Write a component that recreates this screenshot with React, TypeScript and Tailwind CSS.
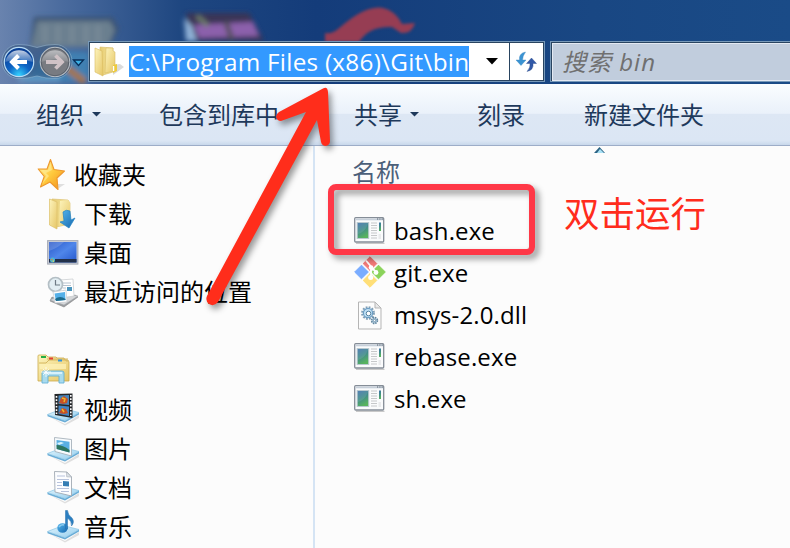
import type { ReactNode } from "react";

const cjk = "font-['Open_Sans','Noto_Sans_CJK_SC',sans-serif]";

function Defs() {
  return (
    <svg className="absolute h-0 w-0">
      <defs>
        <linearGradient id="gold" x1="0" y1="0" x2="1" y2="1">
          <stop offset="0" stopColor="#fdf4bd" />
          <stop offset="1" stopColor="#e6c665" />
        </linearGradient>
        <linearGradient id="goldDark" x1="0" y1="0" x2="1" y2="0">
          <stop offset="0" stopColor="#e6cb70" />
          <stop offset="1" stopColor="#f7e9a4" />
        </linearGradient>
        <linearGradient id="shot" x1="0" y1="0" x2="0.4" y2="1">
          <stop offset="0" stopColor="#3f6fae" />
          <stop offset="0.5" stopColor="#3f8a8c" />
          <stop offset="1" stopColor="#58b35e" />
        </linearGradient>
        <linearGradient id="tray" x1="0" y1="0" x2="1" y2="1">
          <stop offset="0" stopColor="#e2f5fd" />
          <stop offset="1" stopColor="#93cdee" />
        </linearGradient>
        <linearGradient id="blueDown" x1="0" y1="0" x2="1" y2="1">
          <stop offset="0" stopColor="#56b7ee" />
          <stop offset="1" stopColor="#1668ae" />
        </linearGradient>
        <linearGradient id="star" x1="0" y1="0" x2="1" y2="1">
          <stop offset="0" stopColor="#fff2a0" />
          <stop offset="0.5" stopColor="#ffc93c" />
          <stop offset="1" stopColor="#f0891c" />
        </linearGradient>
        <linearGradient id="desk" x1="0" y1="0" x2="1" y2="1">
          <stop offset="0" stopColor="#2a58c8" />
          <stop offset="0.5" stopColor="#4f86ea" />
          <stop offset="1" stopColor="#2456cc" />
        </linearGradient>
        <radialGradient id="back" cx="0.5" cy="0.95" r="0.85">
          <stop offset="0" stopColor="#35d3ff" />
          <stop offset="0.45" stopColor="#0d63c4" />
          <stop offset="1" stopColor="#0a3f94" />
        </radialGradient>
        <linearGradient id="gloss" x1="0" y1="0" x2="0" y2="1">
          <stop offset="0" stopColor="#fff" stopOpacity="0.75" />
          <stop offset="1" stopColor="#fff" stopOpacity="0.18" />
        </linearGradient>
      </defs>
    </svg>
  );
}

function FolderIcon() {
  return (
    <svg width="32" height="34" viewBox="0 0 32 34" className="shrink-0">
      <path d="M20 30 31 22 27 19 20 20Z" fill="#999" opacity=".35" />
      <path d="M7 2 20 3V27L10 30 7 27Z" fill="url(#goldDark)" stroke="#d8bd68" strokeWidth=".6" />
      <path d="M13 3 20 3V6L22 7V26L12 28Z" fill="url(#gold)" stroke="#d8bd68" strokeWidth=".6" />
      <path d="M2 3 9 6 10 31 2 27Z" fill="url(#gold)" stroke="#d8bb5e" strokeWidth=".6" />
      <path d="M20 20 24 19 24 26 20 28Z" fill="#edca3d" />
      <path d="M20.600 21v5" stroke="#fff" strokeWidth="1.300" />
    </svg>
  );
}

function StarIcon() {
  return (
    <svg width="30" height="34" viewBox="0 0 30 34" className="shrink-0">
      <path d="M15 26h13l-6 4z" fill="#888" opacity=".25" />
      <path
        d="M13.500 1.500 17 11.500 27.500 13 20 20 21 31.500 13 24 3.500 29 7.200 18.500 1.200 11 10 11Z"
        fill="url(#star)"
        stroke="#ee982c"
        strokeWidth="1.100"
        strokeLinejoin="round"
      />
      <path d="M13.500 5 15 12 9 15 12 18 5 26 9 18 4 12 11 12Z" fill="#fff3a4" opacity=".55" />
    </svg>
  );
}

function DownloadIcon() {
  return (
    <svg width="32" height="34" viewBox="0 0 32 34" className="shrink-0">
      <path d="M5 2 21 3 23 6V27L9 30 5 27Z" fill="url(#goldDark)" stroke="#dcc273" strokeWidth=".7" />
      <path d="M13 4 21 3 23 6V27L12 29Z" fill="url(#gold)" />
      <path d="M2.500 2 10 5V32L2.500 28Z" fill="url(#gold)" stroke="#dcc06a" strokeWidth=".7" />
      <path d="M16 15q3-3 7-1l1 9 4-2-6 10-9-6 4-1Z" fill="url(#blueDown)" stroke="#2484c4" strokeWidth=".7" />
    </svg>
  );
}

function DesktopIcon() {
  return (
    <svg width="32" height="28" viewBox="0 0 32 28" className="shrink-0">
      <rect x=".6" y="1.600" width="30.300" height="23.500" fill="#c9cdd5" stroke="#a6abb5" />
      <rect x="2" y="3" width="27.500" height="20.500" fill="url(#desk)" />
      <path d="M2 3H17Q11 9 2 12Z" fill="#fff" opacity=".16" />
      <rect x="2" y="20" width="27.500" height="3.500" fill="#223049" />
      <circle cx="5.500" cy="21" r="2.500" fill="#4bb7cf" />
      <path d="M4.200 20h1.200v1.200H4.200z" fill="#ff6a2b" />
      <path d="M5.700 21.400h1.300v1.300H5.700z" fill="#f8e04b" />
    </svg>
  );
}

function RecentIcon() {
  return (
    <svg width="32" height="32" viewBox="0 0 32 32" className="shrink-0">
      <path d="M3 25 17 31 31 21 28 19 15 25 5 21Z" fill="#9a9da1" stroke="#888" strokeWidth=".6" />
      <path d="M3 24 16 18 31 20 17 29Z" fill="#d5d7d9" stroke="#9fa3a8" strokeWidth=".5" />
      <path d="M13 4 26 3 27 20 14 22Z" fill="#fff" stroke="#c4c8cc" strokeWidth=".7" />
      <path d="M16 7h8M16 9.500h8M16 12h3M16 14.500h3" stroke="#b8c3cf" strokeWidth="1" />
      <path d="M20 11h5v4h-5z" fill="#4b95bd" />
      <circle cx="8.500" cy="8.500" r="7" fill="#e2eef3" stroke="#b4bfc5" strokeWidth="1.700" />
      <path d="M8.500 4V9H13" fill="none" stroke="#6d7a84" strokeWidth="1.200" />
      <path d="M6 16 19 14 20 26 8 27Z" fill="#fff" stroke="#c8ccd0" strokeWidth=".7" />
      <path d="M7.500 17.500 18 16 18.500 24 9 25Z" fill="#55b0e8" />
      <path d="M8 23q5-4 10.500 0v1L9 25Z" fill="#1d6b8d" />
    </svg>
  );
}

function LibraryIcon() {
  return (
    <svg width="33" height="31" viewBox="0 0 33 31" className="shrink-0">
      <path d="M1 2Q1 1 2 1H9L11 3H19L20 4H27L28 6H31L32 8V27H1Z" fill="url(#gold)" stroke="#caa94c" strokeWidth=".8" />
      <path d="M10 5h21M2 9H9L12 6H30V8" fill="none" stroke="#d6b861" strokeWidth="1" />
      <path d="M3 10H29V15H3Z" fill="#fdf2b8" opacity=".75" />
      <path d="M4 2h5v2H4z" fill="#23ae45" />
      <path d="M12 3.500h4v2h-4z" fill="#e54031" />
      <path d="M21 5.500h4v2h-4z" fill="#3494dc" />
      <path d="M5 29V19Q5 17 7 17H25Q27 17 27 19V29H22V22H11V29Z" fill="#a6dcf3" stroke="#5eadd4" strokeWidth=".9" opacity=".95" />
      <path d="M7 19H25" stroke="#e7f9ff" strokeWidth="1.500" />
      <path d="M9 13v10M4 18h10M6 15l6 6M12 15l-6 6" stroke="#fff" strokeWidth=".7" />
    </svg>
  );
}

function Tray({ children }: { children: ReactNode }) {
  return (
    <svg width="33" height="34" viewBox="0 0 33 34" className="shrink-0">
      <path d="M3 25 18 32 32 23V26L18 33.500Z" fill="#888" opacity=".25" />
      <path d="M.5 22.500V24.200L18 30.500 32 22.500V20.500L18 28.500Z" fill="#69acd6" />
      <path d="M.5 22.500 16 16.500 32 20.500 18 28.500Z" fill="url(#tray)" stroke="#8cc6e4" strokeWidth=".7" />
      {children}
    </svg>
  );
}

function VideoIcon() {
  return (
    <Tray>
      <path d="M7.500 2 25.500 1.500V26L8 23Z" fill="#25272a" />
      <path d="M11.500 3.500 22 3V13L11.500 12Z" fill="#4787bf" />
      <path d="M11.500 13.500 22 14.500V24L11.500 22Z" fill="#4285c4" />
      <path d="m12 11 2-5 3-2 4 3-1 4-4 1ZM12 21l3-5 4 1 2 4-4 1Z" fill="#c65126" />
      <path d="m15 6 3 1-1 3M15 17l2 3" fill="none" stroke="#e9b62c" strokeWidth="1.500" />
      <path d="M9.500 4V22M23.800 3V24" stroke="#fff" strokeWidth="1.600" strokeDasharray="1.700 1.600" />
    </Tray>
  );
}

function PictureIcon() {
  return (
    <Tray>
      <path d="M7.500 6.500 24.500 8.500V25L8 20.500Z" fill="#f8fbfd" stroke="#a7b2bb" strokeWidth=".9" />
      <path d="M9.500 9 22.500 10.700V21.500L9.700 18Z" fill="#59afe2" />
      <path d="M9.500 14Q16 14 22.500 19V21.500L9.700 18Z" fill="#2d755e" />
      <path d="m10 12 4-1 3 1-5 2Z" fill="#d9f4fd" />
    </Tray>
  );
}

function DocumentIcon() {
  return (
    <Tray>
      <path d="M7.500 1.500 20 2 24.500 7V26L8 22Z" fill="#fcfdff" stroke="#a2aab3" strokeWidth=".9" />
      <path d="m19.500 2 .2 4.800 4.800.2Z" fill="#dce2e8" stroke="#a2aab3" strokeWidth=".6" />
      <path d="M10 6h8M10 9.500h12M10 12.500h5M10 15.500h5M10 18.500h12M14 21.500h8" stroke="#b8c3dc" strokeWidth="1" />
      <path d="m16 11 6 .5v5L16 16Z" fill="#357db3" />
    </Tray>
  );
}

function MusicIcon() {
  return (
    <Tray>
      <ellipse cx="15.500" cy="19" rx="5.200" ry="4.800" fill="url(#blueDown)" />
      <path d="M18.500 1.500H20.500Q21 6 25 9 28 13 24.500 17 25 12 20.500 9V20H18.500Z" fill="#2b7fc1" stroke="#236da9" strokeWidth=".5" />
      <path d="M12 18q2-3 5-2" fill="none" stroke="#8acbef" strokeWidth="1.500" />
    </Tray>
  );
}

function ExeIcon() {
  return (
    <svg width="32" height="27" viewBox="0 0 32 27" className="mb-[2px] shrink-0">
      <path d="M2 26.300H30.500" stroke="#bbb" strokeWidth="1" />
      <rect x=".7" y=".7" width="29" height="24.300" rx="1" fill="#fafbfc" stroke="#858d97" strokeWidth="1.300" />
      <path d="M1.500 1.500H29V3.300H1.500Z" fill="#c6cfd9" />
      <path d="M23 2h1.200M25.300 2h1.200M27.600 2h1.200" stroke="#52606f" strokeWidth="1.200" />
      <rect x="3.200" y="5.500" width="11.500" height="16" fill="url(#shot)" stroke="#b9c9cf" />
      <path d="M4 17Q11 15 14 7V6H4Z" fill="#fff" opacity=".1" />
      <path d="M17 6h6M17 8.500h6M17 11h6M17 13.500h6M17 16h6M17 18.500h6M17 21h6" stroke="#c6c8ca" strokeWidth="1" />
      <path d="M25 5.500h2V14H25Z" fill="url(#shot)" />
      <path d="M24.500 17h2.500V22H24.500Z" fill="#e9eaec" />
    </svg>
  );
}

function GitIcon() {
  return (
    <svg width="32" height="32" viewBox="0 0 32 32" className="mb-[2px] shrink-0">
      <path d="m16 .8 6.800 6.800-6.800 6.800-6.800-6.800Z" fill="#f37b79" stroke="#f37b79" strokeLinejoin="round" />
      <path d="m24.500 9.200 6.800 6.800-6.800 6.800-6.800-6.800Z" fill="#8bd35b" stroke="#8bd35b" strokeLinejoin="round" />
      <path d="m7.500 9.200 6.800 6.800-6.800 6.800L.7 16Z" fill="#79acff" stroke="#79acff" strokeLinejoin="round" />
      <path d="m16 17.600 6.800 6.800-6.800 6.800-6.800-6.800Z" fill="#ffdf78" stroke="#ffdf78" strokeLinejoin="round" />
      <path d="M12 4.500 17 10.500V21M17 11 22 16" fill="none" stroke="#fff" strokeWidth="1.800" />
      <circle cx="17" cy="11.500" r="2.300" fill="#fff" />
      <circle cx="16.700" cy="21.500" r="2.500" fill="#fff" />
      <circle cx="22" cy="16.500" r="2.400" fill="#fff" />
    </svg>
  );
}

function DllIcon() {
  return (
    <svg width="32" height="29" viewBox="0 0 32 29" className="shrink-0">
      <path d="M4.500 1H21L27 7V28H4.500Z" fill="#fcfcfc" stroke="#b5b5b5" />
      <path d="M21 1V7H27Z" fill="#e9e9e9" stroke="#b5b5b5" />
      <circle cx="14" cy="12" r="5.900" fill="none" stroke="#7f9fb6" strokeWidth="2" strokeDasharray="1.800 1.290" />
      <circle cx="14" cy="12" r="4.600" fill="#bfe0f5" stroke="#6b9dc4" strokeWidth="1.200" />
      <circle cx="14.500" cy="12.500" r="2.300" fill="#fff" stroke="#55829f" />
      <circle cx="20.500" cy="19.500" r="2.900" fill="#c3dcec" stroke="#64879f" strokeWidth="1.600" strokeDasharray="1.500 .780" />
      <circle cx="20.500" cy="19.500" r="1.200" fill="#fff" stroke="#557e9d" strokeWidth=".8" />
    </svg>
  );
}

function Wallpaper() {
  return (
    <svg width="790" height="84" className="absolute inset-0">
      <defs>
        <linearGradient id="sky" x1="0" y1="0" x2="1" y2="0">
          <stop offset="0" stopColor="#6983ae" />
          <stop offset="0.08" stopColor="#4a6b9e" />
          <stop offset="0.23" stopColor="#1e4680" />
          <stop offset="0.4" stopColor="#143c7a" />
          <stop offset="0.75" stopColor="#194783" />
          <stop offset="1" stopColor="#1a4b87" />
        </linearGradient>
        <filter id="soft" filterUnits="userSpaceOnUse" x="0" y="0" width="790" height="84">
          <feGaussianBlur stdDeviation="2.800" />
        </filter>
      </defs>
      <rect width="790" height="84" fill="url(#sky)" />
      <g filter="url(#soft)">
        <path d="M34 17H113L119 29 110 46H30Z" fill="#3a5273" />
        <path d="M37 21H110L115 30 108 47H31Z" fill="#6a7f8f" />
        <path d="M45 25v18M58 25v18M72 25v18M86 25v18M98 25v18" stroke="#788a97" strokeWidth="5" />
        <path d="M186 13H249L264 41H190Z" fill="#3b3556" />
        <path d="M194 25 253 22 259 36 199 38Z" fill="#8c60ac" />
        <path d="M184 18 192 26 197 41H186Z" fill="#8fb0d6" />
        <path d="M197 16 208 26" stroke="#71806a" strokeWidth="4" />
        <path d="M226 22 232 40" stroke="#52505a" strokeWidth="5" />
        <path d="M45 51 89 52V82H22L30 74Z" fill="#3f80b2" />
        <path d="M64 66 85 82" stroke="#a57548" strokeWidth="7" />
        <path d="M18 76H60V82H18Z" fill="#79afd5" opacity=".55" />
      </g>
      <path
        d="M325 33Q333 34 338 29C350 19 363 8 378 7.500Q394 8 402 24L415 23Q412 34 401 33L392 27Q369 26 359 42H325Z"
        fill="#963d53"
        className="blur-[1.500px]"
      />
    </svg>
  );
}

function NavButtons() {
  return (
    <svg width="88" height="40" viewBox="0 0 88 40" className="shrink-0">
      <path
        d="M19 3.500Q28 3.500 37 6.500 46 3.500 55 3.500A17 17 0 0 1 55 37.500Q46 37.500 37 35 28 37.500 19 37.500A17 17 0 0 1 19 3.500Z"
        fill="#22446b"
        fillOpacity=".4"
        stroke="#a9cae1"
        strokeOpacity=".45"
      />
      <circle cx="19" cy="21" r="14.700" fill="url(#back)" stroke="#b9dcf4" strokeWidth="1.200" />
      <path d="M5.200 21A14 14 0 0 1 32.800 21Q18 16 5.200 21Z" fill="url(#gloss)" />
      <path d="M27 21H13M18.500 14.500 12 21 18.500 27.500" fill="none" stroke="#fff" strokeWidth="4" />
      <circle cx="55" cy="21" r="14.700" fill="#787b81" stroke="#b4bcc4" strokeWidth="1.200" />
      <circle cx="55" cy="21" r="13.800" fill="none" stroke="#4b535e" strokeWidth=".7" />
      <path d="M41.200 21A14 14 0 0 1 68.800 21Q54 16 41.200 21Z" fill="url(#gloss)" opacity=".65" />
      <path d="M46 21H61M55.500 14.500 62 21 55.500 27.500" fill="none" stroke="#cfc2c6" strokeWidth="3.800" />
      <path d="M73.500 19H83.500L78.500 24.500Z" fill="#3bb0e5" stroke="#092e59" strokeWidth="1.300" />
    </svg>
  );
}

function RefreshIcon() {
  return (
    <svg width="25" height="24" viewBox="0 0 25 24">
      <path d="M11.500 2Q4.500 3.500 5.500 10H2L7 15.500 12 10H8.500Q8.500 6 11.500 2Z" fill="#3a93d2" stroke="#3a86bf" strokeWidth=".4" />
      <path d="M13 21.500Q20 20 19 13.500H22.500L17.500 8 12.500 13.500H16Q16.500 17.500 13 21.500Z" fill="#3158a7" stroke="#294888" strokeWidth=".4" />
    </svg>
  );
}

function AddressBar() {
  return (
    <div className="flex h-[41px] w-[457px] shrink-0 border border-[#7799b9] bg-[#294460] p-px">
      <div className="flex min-w-0 flex-1 items-center bg-white">
        <div className="ml-[3px] w-[36px]">
          <FolderIcon />
        </div>
        <div className={`flex h-[31px] w-[340px] items-center whitespace-pre bg-[#3399ff] text-[24.300px] leading-none text-white ${cjk}`}>
          <span className="pt-px tracking-[0.260px]">C:\Program Files (x86)\Git\bin</span>
        </div>
        <svg width="12" height="7" className="ml-[17px]">
          <path d="M0 0H12L6 6.500Z" fill="#000" />
        </svg>
      </div>
      <div className="ml-px flex w-[33px] items-center justify-center bg-white">
        <RefreshIcon />
      </div>
    </div>
  );
}

function Caret() {
  return (
    <svg width="9" height="5">
      <path d="M0 0H9L4.500 4.500Z" fill="#1e395b" />
    </svg>
  );
}

const commands = [
  { label: "组织", width: "w-[123px]", menu: true },
  { label: "包含到库中", width: "w-[195px]", menu: false },
  { label: "共享", width: "w-[123px]", menu: true },
  { label: "刻录", width: "w-[107px]", menu: false },
  { label: "新建文件夹", width: "w-[150px]", menu: false },
];

const places = [
  { label: "收藏夹", icon: <StarIcon />, root: true },
  { label: "下载", icon: <DownloadIcon /> },
  { label: "桌面", icon: <DesktopIcon /> },
  { label: "最近访问的位置", icon: <RecentIcon /> },
];

const libraries = [
  { label: "库", icon: <LibraryIcon />, root: true },
  { label: "视频", icon: <VideoIcon /> },
  { label: "图片", icon: <PictureIcon /> },
  { label: "文档", icon: <DocumentIcon /> },
  { label: "音乐", icon: <MusicIcon /> },
];

const files = [
  { name: "bash.exe", icon: <ExeIcon /> },
  { name: "git.exe", icon: <GitIcon /> },
  { name: "msys-2.0.dll", icon: <DllIcon /> },
  { name: "rebase.exe", icon: <ExeIcon /> },
  { name: "sh.exe", icon: <ExeIcon /> },
];

function TreeGroup({ items }: { items: { label: string; icon: ReactNode; root?: boolean }[] }) {
  return (
    <ul>
      {items.map((item) => (
        <li key={item.label} className={`flex h-[39.100px] items-center ${item.root ? "pl-[37px]" : "pl-[47px]"}`}>
          <span className="flex w-[37px] shrink-0">{item.icon}</span>
          <span className="pt-px text-2xl leading-none whitespace-nowrap">{item.label}</span>
        </li>
      ))}
    </ul>
  );
}

function Annotations() {
  return (
    <>
      <svg width="790" height="548" className="absolute inset-0 drop-shadow-[3px_4px_3px_rgba(0,0,0,0.4)]">
        <path
          d="M323 88.500Q327.500 86 328 92L330 141Q330 145 326 146Q322 146 321 142L317 120 218 302Q214 307 209 304Q205 301 207 296L306 112 281 121Q277 121 276 117Q276 114 279 112Z"
          fill="#ff2d1b"
        />
      </svg>
      <div className="absolute top-[184px] left-[328px] h-[71px] w-[207px] rounded-[8px] border-[6px] border-[#ff3847] drop-shadow-[4px_4px_3px_rgba(0,0,0,0.4)]" />
      <div className="absolute top-[194px] left-[564px] text-[35.500px] leading-[38px] whitespace-nowrap text-[#ff2c1c]">双击运行</div>
    </>
  );
}

export default function App() {
  return (
    <div className={`relative flex h-[548px] w-[790px] flex-col overflow-hidden bg-[#fcfcfc] text-black ${cjk}`}>
      <Defs />
      <header className="relative h-[84px] shrink-0 border-b border-[#152638]">
        <Wallpaper />
        <div className="relative flex h-full items-start pt-[41px]">
          <NavButtons />
          <AddressBar />
          <div className="ml-[5px] flex h-[41px] flex-1 border border-r-0 border-[#7799b9] bg-[#294460] pt-px pl-px">
            <div className="flex flex-1 items-center border border-r-0 border-[#e3e9f2] bg-[#c1cddd] pl-[9px] text-2xl leading-none tracking-[1px] text-[#707070] italic">
              搜索 bin
            </div>
          </div>
        </div>
      </header>
      <nav className="flex h-[62px] shrink-0 items-center border-b border-[#9dadc8] bg-[linear-gradient(#fafdff_0%,#eaf1fa_48%,#dde7f4_50%,#dbe6f4_93%,#c8d8eb_100%)] pl-[36px] text-2xl leading-none text-[#1e395b]">
        {commands.map((command) => (
          <div key={command.label} className={`flex shrink-0 items-center gap-2 whitespace-nowrap ${command.width}`}>
            {command.label}
            {command.menu && <Caret />}
          </div>
        ))}
      </nav>
      <main className="flex min-h-0 flex-1">
        <aside className="flex w-[315px] shrink-0 flex-col gap-[39px] border-r-2 border-[#d5e4f4] pt-[9px]">
          <TreeGroup items={places} />
          <TreeGroup items={libraries} />
        </aside>
        <section className="flex-1">
          <div className="flex h-[64px] flex-col">
            <svg width="11" height="6" className="mt-px ml-[279px]">
              <path d="M0 6 5.500 0 11 6Z" fill="#2b6384" />
              <path d="M3 6 6 2 10 6Z" fill="#a9e1f5" />
            </svg>
            <div className="mt-[7px] ml-[37px] text-2xl leading-none text-[#4c607a]">名称</div>
          </div>
          <ul>
            {files.map((file) => (
              <li key={file.name} className="flex h-[42px] items-center pl-[39px]">
                <span className="flex w-[40px] shrink-0">{file.icon}</span>
                <span className="text-2xl leading-none tracking-[0.120px]">{file.name}</span>
              </li>
            ))}
          </ul>
        </section>
      </main>
      <Annotations />
    </div>
  );
}
